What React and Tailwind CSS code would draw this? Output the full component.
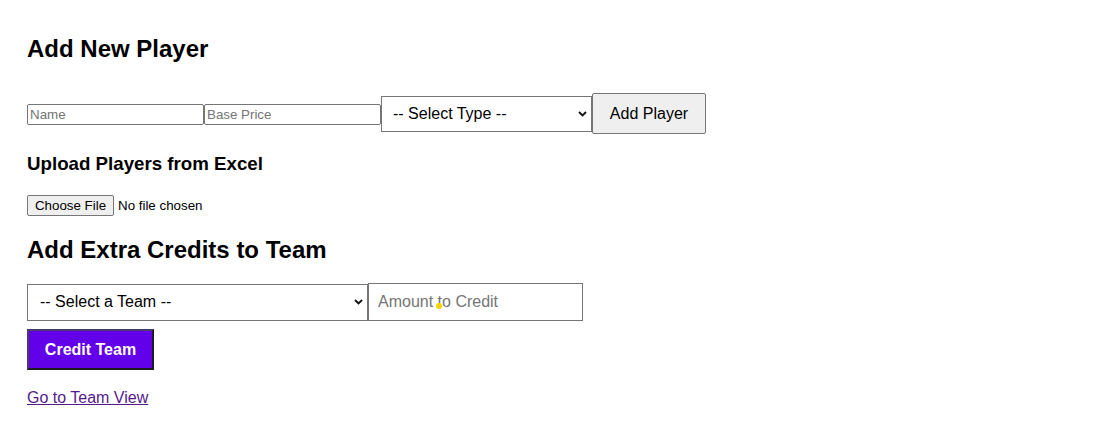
import React, { useState } from "react";

const Chevron = () => (
  <svg
    className="pointer-events-none absolute right-[5px] top-1/2 -translate-y-1/2"
    width="9"
    height="6"
    viewBox="0 0 9 6"
    fill="none"
  >
    <path d="M1 1l3.5 3.5L8 1" stroke="#111" strokeWidth="1.8" />
  </svg>
);

const App = () => {
  const [player, setPlayer] = useState({ name: "", price: "", type: "" });
  const [credit, setCredit] = useState({ team: "", amount: "" });

  const handlePlayer = (e) => setPlayer((p) => ({ ...p, [e.target.name]: e.target.value }));
  const handleCredit = (e) => setCredit((c) => ({ ...c, [e.target.name]: e.target.value }));

  return (
    <div className="min-h-screen bg-white text-black font-['Liberation_Sans',Arial,sans-serif] px-[27px] pt-[35px]">
      {/* Add player */}
      <h2 className="text-[24px] font-bold leading-[28px]">Add New Player</h2>
      <div className="mt-[30px] flex h-[41px] items-center">
        <input
          name="name"
          value={player.name}
          onChange={handlePlayer}
          placeholder="Name"
          className="mt-[2px] h-[21px] w-[177px] rounded-[2px] border border-[#767676] px-[2px] text-[13.33px] placeholder:text-[#757575] outline-none"
        />
        <input
          name="price"
          value={player.price}
          onChange={handlePlayer}
          placeholder="Base Price"
          className="mt-[2px] h-[21px] w-[177px] rounded-[2px] border border-[#767676] px-[2px] text-[13.33px] placeholder:text-[#757575] outline-none"
        />
        <div className="relative">
          <select
            name="type"
            value={player.type}
            onChange={handlePlayer}
            className="h-[36px] w-[211px] appearance-none border border-[#767676] bg-white pl-[11px] text-[16px] outline-none"
          >
            <option value="">-- Select Type --</option>
            <option value="batsman">Batsman</option>
            <option value="bowler">Bowler</option>
            <option value="allrounder">All Rounder</option>
            <option value="wicketkeeper">Wicket Keeper</option>
          </select>
          <Chevron />
        </div>
        <button className="h-[41px] w-[114px] rounded-[2px] border border-[#767676] bg-[#efefef] text-[16px]">
          Add Player
        </button>
      </div>

      {/* Excel upload */}
      <h3 className="mt-[19px] text-[18.72px] font-bold leading-[22px]">Upload Players from Excel</h3>
      <label className="mt-[20px] flex h-[21px] items-center text-[13.33px]">
        <span className="flex h-[21px] w-[87px] items-center justify-center rounded-[2px] border border-[#767676] bg-[#efefef]">
          Choose File
        </span>
        <span className="ml-[4px]">No file chosen</span>
        <input type="file" className="hidden" />
      </label>

      {/* Extra credits */}
      <h2 className="mt-[20px] text-[24px] font-bold leading-[28px]">Add Extra Credits to Team</h2>
      <div className="mt-[19px] flex h-[38px] items-center">
        <div className="relative">
          <select
            name="team"
            value={credit.team}
            onChange={handleCredit}
            className="h-[37px] w-[341px] appearance-none border border-[#767676] bg-white pl-[12px] text-[16px] outline-none"
          >
            <option value="">-- Select a Team --</option>
            <option value="a">Team A</option>
            <option value="b">Team B</option>
          </select>
          <Chevron />
        </div>
        <div className="relative">
          <input
            name="amount"
            value={credit.amount}
            onChange={handleCredit}
            placeholder="Amount to Credit"
            className="h-[38px] w-[215px] border border-[#767676] pl-[9px] text-[16px] placeholder:text-[#757575] outline-none"
          />
          <span className="pointer-events-none absolute left-[68px] top-[20px] h-[6px] w-[6px] rounded-full bg-[#f5d400]" />
        </div>
      </div>
      <button className="mt-[8px] h-[41px] w-[127px] border-2 border-t-[#4a3c68] border-l-[#4a3c68] border-r-[#1c1c1c] border-b-[#1c1c1c] bg-[#6200ea] text-[16px] font-bold text-white">
        Credit Team
      </button>

      <div className="mt-[19px] leading-[18px]">
        <a href="#team" className="text-[16px] text-[#551a8b] underline">
          Go to Team View
        </a>
      </div>
    </div>
  );
};

export default App;
